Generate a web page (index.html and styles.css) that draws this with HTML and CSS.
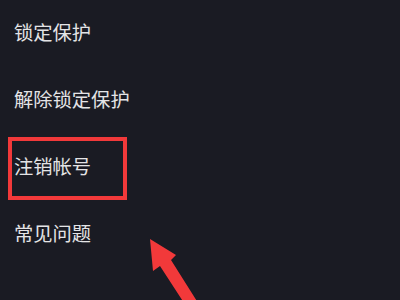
FILE: index.html
```html
<!DOCTYPE html>
<html lang="zh-CN">
<head>
<meta charset="utf-8">
<link rel="stylesheet" href="styles.css">
</head>
<body>
<ul class="menu">
  <li class="item">锁定保护</li>
  <li class="item">解除锁定保护</li>
  <li class="item item-marked">注销帐号</li>
  <li class="item">常见问题</li>
</ul>
<svg class="arrow" width="400" height="300" viewBox="0 0 400 300" aria-hidden="true">
  <polygon points="150,239 176,255 171,260 200,306 186,306 160,266 153,271" fill="#f2393a"/>
</svg>
</body>
</html>
```

FILE: styles.css
```css
html, body {
  margin: 0;
  padding: 0;
  width: 400px;
  height: 300px;
  overflow: hidden;
  background: #1a1b23;
}
body {
  position: relative;
  font-family: "Noto Sans CJK SC", "Noto Sans", sans-serif;
  color: #e4e4e6;
}
.menu {
  list-style: none;
  margin: -1.5px 0 0 0;
  padding: 0 0 0 14px;
}
.item {
  font-size: 19.3px;
  font-weight: 400;
  line-height: 27px;
  padding: 20px 0;
}
.item-marked {
  position: relative;
}
.item-marked::after {
  content: "";
  position: absolute;
  left: -6px;
  top: 4.5px;
  width: 111px;
  height: 55px;
  border: 4px solid #f2393a;
}
.arrow {
  position: absolute;
  left: 0;
  top: 0;
  pointer-events: none;
}
```
